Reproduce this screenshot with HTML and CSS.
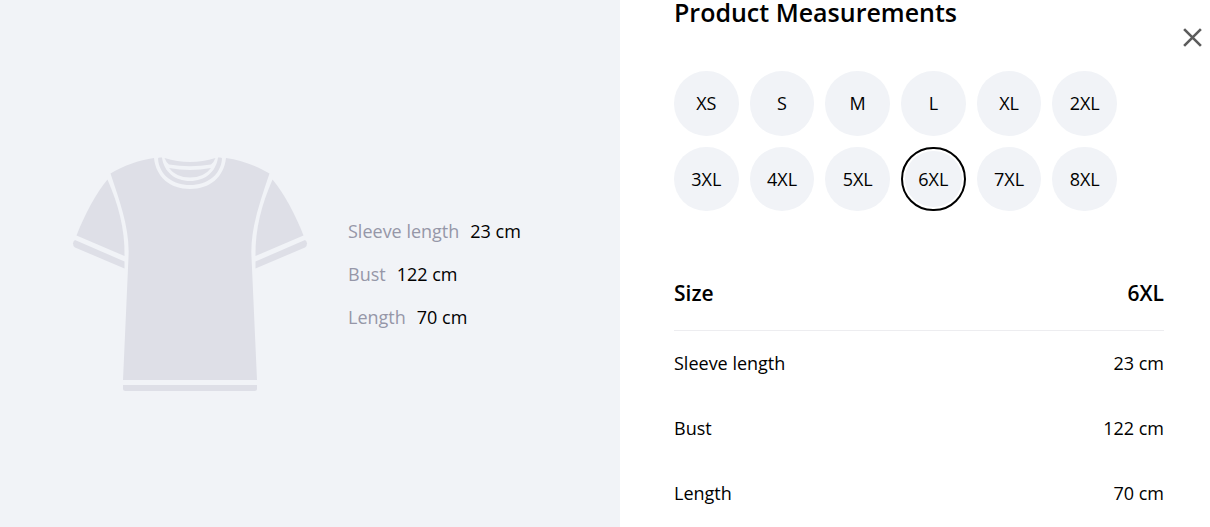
FILE: index.html
```
<!DOCTYPE html>
<html lang="en">
	<head>
		<meta charset="utf-8">
		<meta name="viewport" content="width=device-width, initial-scale=1">
		<title>Product Measurements</title>
		<link rel="stylesheet" href="styles.css">
	</head>
	<body>
		<div class="dialog">
			<div class="preview">
				<svg class="shirt" viewBox="0 1 236 238" aria-hidden="true">
					<!-- body -->
					<path d="M38.5 19.5C51 12 67 6 82 4C84 23 98 35 118 35C138 35 152 23 154 4C169 6 185 12 197.500 19.500C188 48 178 75 179.500 103L185 226H51L56.500 103C58 75 48 48 38.500 19.500Z"/>
					<!-- sleeves -->
					<path d="M35.500 25.500C24 39 12 62 4.500 81.500L52.500 102C53 74 46 50 35.500 25.500Z"/>
					<path d="M200.500 25.500C212 39 224 62 231.500 81.500L183.500 102C183 74 190 50 200.500 25.500Z"/>
					<!-- cuffs -->
					<path d="M3 86L52.500 107.500V114.500L3 93.500Q1 92.500 1 89.500Q1 87 3 86Z"/>
					<path d="M233 86L183.500 107.500V114.500L233 93.500Q235 92.500 235 89.500Q235 87 233 86Z"/>
					<!-- collar -->
					<path d="M86 4.500Q86 3 90 3.500C92 18 103 27 118 27C133 27 144 18 146 3.500Q150 3 150 4.500C149 21 135 31 118 31C101 31 87 21 86 4.500Z"/>
					<path d="M92.500 4Q118 12 143.500 4Q142 8 139 10.500Q118 14 97 10.500Q94 8 92.500 4Z"/>
					<path d="M97 14Q118 18 139 14Q132 23.500 118 23.500Q104 23.500 97 14Z"/>
					<!-- hem -->
					<path d="M51 231H185V234.500Q185 237 182.500 237H53.500Q51 237 51 234.500Z"/>
				</svg>
				<dl class="summary">
					<div><dt>Sleeve length</dt><dd>23 cm</dd></div>
					<div><dt>Bust</dt><dd>122 cm</dd></div>
					<div><dt>Length</dt><dd>70 cm</dd></div>
				</dl>
			</div>
			<div class="details">
				<button type="button" class="close" aria-label="Close">
					<svg viewBox="0 0 20 20" aria-hidden="true"><path d="M2 2L18 18M18 2L2 18"/></svg>
				</button>
				<h1>Product Measurements</h1>
				<div class="sizes">
					<button type="button">XS</button>
					<button type="button">S</button>
					<button type="button">M</button>
					<button type="button">L</button>
					<button type="button">XL</button>
					<button type="button">2XL</button>
					<button type="button">3XL</button>
					<button type="button">4XL</button>
					<button type="button">5XL</button>
					<button type="button" class="active" aria-pressed="true">6XL</button>
					<button type="button">7XL</button>
					<button type="button">8XL</button>
				</div>
				<table>
					<thead>
						<tr><th>Size</th><th>6XL</th></tr>
					</thead>
					<tbody>
						<tr><td>Sleeve length</td><td>23 cm</td></tr>
						<tr><td>Bust</td><td>122 cm</td></tr>
						<tr><td>Length</td><td>70 cm</td></tr>
					</tbody>
				</table>
			</div>
		</div>
	</body>
</html>
```
FILE: styles.css
```
* {
	box-sizing: border-box;
}

body {
	margin: 0;
	font-family: "Segoe UI", "Open Sans", "Noto Sans", sans-serif;
	font-size: 18px;
	line-height: 24px;
	color: #000;
	background-color: #fff;
}

.dialog {
	display: grid;
	grid-template-columns: 620fr 590fr;
	min-height: 100vh;
}

.preview {
	display: flex;
	align-items: center;
	gap: 40px;
	padding: 20px 40px 0 72px;
	background-color: #f1f3f7;
}

.shirt {
	width: 236px;
	flex-shrink: 0;
	fill: #dedfe7;
}

.summary {
	display: grid;
	gap: 19px;
	margin: 0;
}

.summary div {
	display: flex;
	gap: 11px;
}

.summary dt {
	color: #9697a8;
}

.summary dd {
	margin: 0;
}

.details {
	position: relative;
	padding: 0 46px 0 54px;
}

h1 {
	margin: 0 0 47px;
	font-size: 25px;
	line-height: 24px;
	font-weight: 600;
}

button {
	padding: 0;
	border: none;
	font: inherit;
	color: inherit;
	cursor: pointer;
}

/* stays in the corner of the dialog */
.close {
	position: absolute;
	top: 27px;
	right: 7px;
	width: 21px;
	height: 21px;
	background: none;
}

.close svg {
	display: block;
	fill: none;
	stroke: #5c5c5c;
	stroke-width: 2.5;
}

.sizes {
	display: grid;
	grid-template-columns: repeat(6, 1fr);
	gap: 11px;
	max-width: 443px;
	margin-bottom: 44px;
}

.sizes button {
	aspect-ratio: 1;
	border-radius: 50%;
	background-color: #f1f3f7;
}

.sizes .active {
	border: 2px solid #000;
	box-shadow: inset 0 0 0 2px #fff;
}

table {
	width: 100%;
	border-collapse: collapse;
}

th,
td {
	height: 65px;
	padding: 0;
	text-align: left;
}

th {
	height: 75px;
	font-size: 21px;
	font-weight: 600;
	border-bottom: 1px solid #ededf0;
}

th:last-child,
td:last-child {
	text-align: right;
}
```
